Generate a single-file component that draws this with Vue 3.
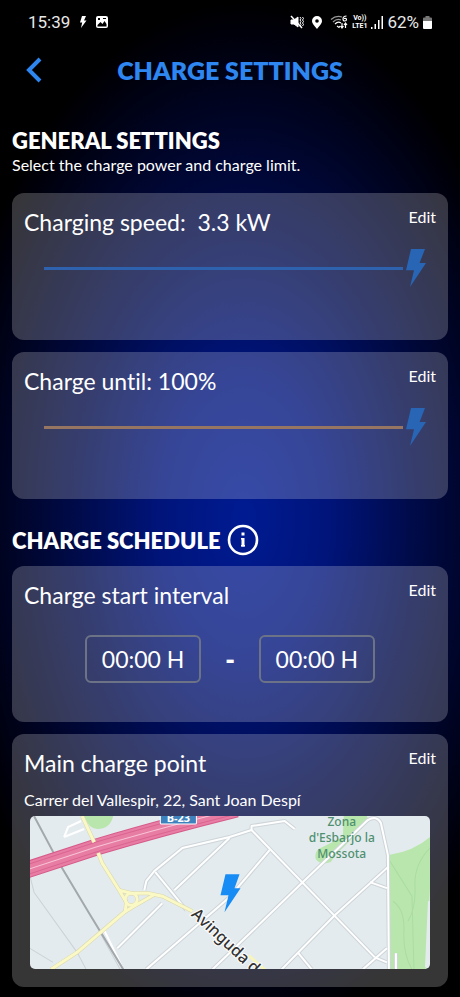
<!-- Charge settings screen -->
<template>
  <div class="screen">
    <div class="status">
      <div class="status-side">
        <span class="clock">15:39</span>
        <svg width="10" height="14" viewBox="0 0 10 14" fill="#fff"><path d="M4 1h4L6 5.500h2.500L3 13l1.200-5.500H2z" /></svg>
        <svg width="12" height="12" viewBox="0 0 12 12">
          <rect width="12" height="12" rx="2" fill="#fff" />
          <path d="M1.500 9l3-3 2 2 2-3 2 3v2.500h-9z" fill="#000" />
          <path d="M2 2h2v2H2zM7 2h3v1H7z" fill="#000" />
        </svg>
      </div>
      <div class="status-side right">
        <svg width="14" height="14" viewBox="0 0 14 14" fill="none" stroke="#fff">
          <path d="M1 5h3l4-3v10L4 9H1z" fill="#fff" />
          <path d="M1 1l11 12" stroke-width="1.500" />
          <path d="M10 2l1 1.500-1 1.500 1 1.500-1 1.500 1 1.500-1 1.500M12.500 2l1 1.500-1 1.500 1 1.500-1 1.500 1 1.500-1 1.500" />
        </svg>
        <svg class="pin" width="10" height="13" viewBox="0 0 10 13">
          <path d="M5 0a5 5 0 0 0-5 5c0 3 3 5 5 8 2-3 5-5 5-8a5 5 0 0 0-5-5z" fill="#fff" />
          <circle cx="5" cy="5" r="1.800" fill="#000" />
        </svg>
        <svg width="18" height="14" viewBox="0 0 18 14" fill="none" stroke="#999" stroke-width="1.200">
          <path d="M1 4.500Q6 0 12 2M3 7q4-4 8-2" />
          <path d="M5 9q3-3 6-1M7 11l2 1.500 1-1.500" stroke="#fff" />
          <path d="M16.500 1Q13 1 13 4q0 2 1.800 2 1.700 0 1.700-1.500T14 3.500M12 8v5m-1.500-2L12 13l1.500-2M15.500 13V8M14 10l1.500-2L17 10" stroke="#fff" />
        </svg>
        <span class="volte"><span>Vo))</span><span>LTE1</span></span>
        <svg width="12" height="13" viewBox="0 0 12 13" fill="#fff">
          <path d="M0 11h1.500v2H0zM3.500 8H5v5H3.500zM7 4h1.500v9H7zM10.500 0H12v13h-1.500z" />
        </svg>
        <span class="clock">62%</span>
        <svg width="9" height="13" viewBox="0 0 9 13">
          <path d="M2.500 0h4v1.500H8a1 1 0 0 1 1 1V6H0V2.500a1 1 0 0 1 1-1h1.500z" fill="#777" />
          <path d="M0 5h9v7a1 1 0 0 1-1 1H1a1 1 0 0 1-1-1z" fill="#fff" />
        </svg>
      </div>
    </div>

    <header class="header">
      <button class="back" aria-label="Back">
        <svg width="16" height="26" viewBox="0 0 16 26" fill="none" stroke="#2e86f0" stroke-width="4"><path d="M14 2L3 13l11 11" /></svg>
      </button>
      <h1>CHARGE SETTINGS</h1>
    </header>

    <main>
      <section class="intro">
        <h2>GENERAL SETTINGS</h2>
        <p>Select the charge power and charge limit.</p>
      </section>

      <section v-for="item in sliders" :key="item.id" class="card slider-card">
        <div class="card-head">
          <label :for="item.id">{{ item.label }}</label>
          <button class="edit">Edit</button>
        </div>
        <input :id="item.id" v-model="item.value" class="range" :class="item.color" type="range" min="0" max="100" />
      </section>

      <div class="schedule">
        <h2>CHARGE SCHEDULE</h2>
        <button class="info" aria-label="Information">
          <svg width="32" height="32" viewBox="0 0 32 32" fill="none" stroke="#fff">
            <circle cx="16" cy="16" r="14" stroke-width="2.600" />
            <path d="M16 8.500v3M16 14v8.500" stroke-width="3" />
            <path d="M14 14.700h2M14 21.800h4" stroke-width="1.400" />
          </svg>
        </button>
      </div>

      <section class="card time-card">
        <div class="card-head">
          <h3>Charge start interval</h3>
          <button class="edit">Edit</button>
        </div>
        <div class="times">
          <input v-model="from" type="text" aria-label="From" />
          <span>-</span>
          <input v-model="to" type="text" aria-label="To" />
        </div>
      </section>

      <section class="card point-card">
        <div class="card-head">
          <h3>Main charge point</h3>
          <button class="edit">Edit</button>
        </div>
        <p>Carrer del Vallespir, 22, Sant Joan Despí</p>
        <svg class="map" viewBox="0 0 399 153" preserveAspectRatio="xMidYMid slice">
          <rect width="399" height="153" fill="#e4ebee" />
          <!-- parks -->
          <g fill="#b9e6ac">
            <path d="M54 0h29q-3 13-16 13-8 0-13-13z" />
            <path d="M313 0h23l2 5-24 25q-9 8-14 16-10 4-15-3-2-9 7-12l20-10z" />
            <path d="M358 39q25-4 41-18v50l-4 82h-37z" />
          </g>
          <path d="M362 85q12 8 11 30t8 38M399 32q-16 16-15 38t-7 35M359 45l22 35 2 73" fill="none" stroke="#abdca2" />
          <path d="M399 85l-3 66" stroke="#e4ebee" stroke-width="4" />
          <!-- streets -->
          <g v-for="s in streetLayers" :key="s.color" fill="none" :stroke="s.color" :stroke-width="s.width" stroke-linejoin="round">
            <path v-for="d in streets" :key="d" :d="d" />
          </g>
          <path d="M0 60l4 16 43 60 9 17M70 117l20 36M0 132l23 14" fill="none" stroke="#ccd3d7" />
          <path d="M74 114l19 39M34 21l20-8M34 21l4-10 13-6" fill="none" stroke="#fff" stroke-width="2" />
          <!-- railway -->
          <path d="M4 0l25 47 30 50 34 56" fill="none" stroke="#a2a8ab" stroke-width="2" />
          <!-- motorway -->
          <g fill="none">
            <path d="M-4 54L66 31Q130 12 206-7" stroke="#d65b8a" stroke-width="17" />
            <path d="M-4 54L66 31Q130 12 206-7" stroke="#e87da4" stroke-width="15" />
            <path d="M-4 54L66 31Q130 12 206-7" stroke="#f6c5d7" />
            <path d="M-4 49L66 26Q130 7 206-12M-4 59L66 36Q130 17 206-2" stroke="#d96591" />
          </g>
          <!-- main road -->
          <g v-for="s in roadLayers" :key="s.color" fill="none" :stroke="s.color" :stroke-width="s.width">
            <path d="M52 0l12 26M68 37l4 10 17 27 12 3h17l14 3 30 15M21 153l26-17 47-40 8-5 21-12M89 74l7 12-1 10" />
            <circle cx="101" cy="83" r="6" />
          </g>
          <path d="M218 139l18 16" stroke="#f8f5bb" stroke-width="3" />
          <rect x="130" y="-6" width="36" height="14" rx="1" fill="#3e82bd" stroke="#fff" />
          <text class="badge" x="148" y="6">B-23</text>
          <g class="park">
            <text x="311" y="10">Zona</text>
            <text x="311" y="26">d'Esbarjo la</text>
            <text x="311" y="42">Mossota</text>
          </g>
          <text class="avenue" transform="translate(160 99) rotate(43)">Avinguda d</text>
          <path d="M195 58h14l-5 14h6l-16 24 4-17h-8z" fill="#178cf5" />
        </svg>
      </section>
    </main>
  </div>
</template>

<script setup>
import { ref } from "vue";

const sliders = ref([
  { id: "speed", label: "Charging speed:\u00a0 3.3 kW", value: 100, color: "blue" },
  { id: "limit", label: "Charge until: 100%", value: 100, color: "orange" },
]);

const from = ref("00:00 H");
const to = ref("00:00 H");

const streets = [
  "M114 74l2-9 8-10 28-23 47-11 22-7v-4l33-5 10 8",
  "M125 56l31 38M144 74l55-52",
  "M87 132l45-45M116 153l83-72 40-47",
  "M221 14l123 127",
  "M182 153l27-26 63-61 65-62q9-5 13 3l7 32 1 114",
  "M251 153l53-54 53-48M339 66l17 6",
  "M332 153l24-21M344 141l12 5M267 136l14 17",
  "M365 137v16",
];

const streetLayers = [
  { color: "#ced5d9", width: 4 },
  { color: "#ffffff", width: 2 },
];
const roadLayers = [
  { color: "#d9d7ac", width: 4 },
  { color: "#faf8c4", width: 3 },
];
</script>

<style>
body {
  margin: 0;
  background: #000;
}
</style>

<style scoped>
.screen {
  min-height: 100vh;
  box-sizing: border-box;
  padding-bottom: 9px;
  color: #fff;
  font-family: Lato, "Open Sans", sans-serif;
  font-variant-ligatures: none;
  background: radial-gradient(ellipse 66% 52% at 53% 52%, #001b92 0%, #00147a 28%, #000b4a 55%, #000424 78%, #00000a 94%, #000 100%) #000;
}
h1, h2, h3, p {
  margin: 0;
}
button {
  padding: 0;
  border: 0;
  background: none;
  color: inherit;
  font-family: inherit;
  cursor: pointer;
}
svg {
  display: block;
}

.status {
  display: flex;
  justify-content: space-between;
  height: 44px;
  padding: 0 28px;
  font-family: Roboto, sans-serif;
}
.status-side {
  display: flex;
  align-items: center;
  gap: 8px;
}
.status-side.right {
  gap: 4px;
}
.clock {
  font-size: 17px;
  color: #e8e8e8;
}
.pin {
  margin: 0 4px;
}
.volte {
  display: flex;
  flex-direction: column;
  align-items: center;
  font-size: 7px;
  line-height: 8px;
  font-weight: 700;
}

.header {
  display: grid;
  grid-template-columns: 44px 1fr 44px;
  align-items: center;
  height: 52px;
  padding: 0 12px;
}
.back {
  display: flex;
  justify-content: center;
}
.header h1 {
  text-align: center;
  font-size: 25px;
  line-height: 32px;
  font-weight: 800;
  color: #2e86f0;
}

main {
  display: flex;
  flex-direction: column;
  gap: 12px;
  padding: 31px 12px 0;
}
h2 {
  font-size: 22px;
  line-height: 28px;
  font-weight: 800;
}
.intro {
  padding-bottom: 6px;
}
.intro p,
.point-card p {
  font-size: 16px;
  line-height: 20px;
}

.card {
  padding: 13px 12px;
  border-radius: 12px;
  background: rgba(255, 255, 255, 0.21);
}
.card-head {
  display: flex;
  justify-content: space-between;
  align-items: flex-start;
}
.card-head label,
.card-head h3 {
  font-size: 23px;
  line-height: 32px;
  font-weight: 400;
}
.edit {
  font-size: 16px;
  line-height: 22px;
}
.slider-card {
  padding-bottom: 53px;
}

.range {
  appearance: none;
  display: block;
  width: calc(100% - 30px);
  height: 38px;
  margin: 11px 10px 0 20px;
  background: linear-gradient(#2f62ae, #2f62ae) 0 50% / calc(100% - 23px) 3px no-repeat;
}
.range.orange {
  background-image: linear-gradient(#967662, #967662);
}
.range::-webkit-slider-thumb {
  appearance: none;
  width: 20px;
  height: 38px;
  border: 0;
  background: #2865b4;
  clip-path: polygon(25% 0, 95% 0, 68% 37%, 100% 37%, 20% 100%, 40% 56%, 0 56%);
}

.schedule {
  display: flex;
  align-items: center;
  gap: 6px;
  padding: 13px 0 0;
}
.schedule h2 {
  padding-top: 2px;
}
.schedule + .card {
  margin-top: -2px;
}

.time-card {
  padding-bottom: 39px;
}
.times {
  display: flex;
  justify-content: center;
  align-items: center;
  gap: 24px;
  margin-top: 24px;
}
.times input {
  box-sizing: border-box;
  width: 116px;
  height: 48px;
  padding: 0;
  border: 2px solid #6c7386;
  border-radius: 6px;
  background: none;
  color: #fff;
  font-family: inherit;
  font-size: 23px;
  text-align: center;
}
.times span {
  font-size: 26px;
  line-height: 32px;
  font-weight: 800;
}

.point-card {
  padding-bottom: 18px;
}
.point-card p {
  margin-top: 11px;
}
.map {
  width: calc(100% - 12px);
  margin: 6px 6px 0;
  border-radius: 5px;
}
.badge {
  font: 700 11px "Noto Sans", sans-serif;
  text-anchor: middle;
  fill: #fff;
}
.park {
  font: 500 12px "Noto Sans", sans-serif;
  text-anchor: middle;
  fill: #4f9070;
}
.avenue {
  font: 500 16px "Noto Sans", sans-serif;
  fill: #333;
  stroke: #fff;
  stroke-width: 2px;
  paint-order: stroke;
}
</style>
